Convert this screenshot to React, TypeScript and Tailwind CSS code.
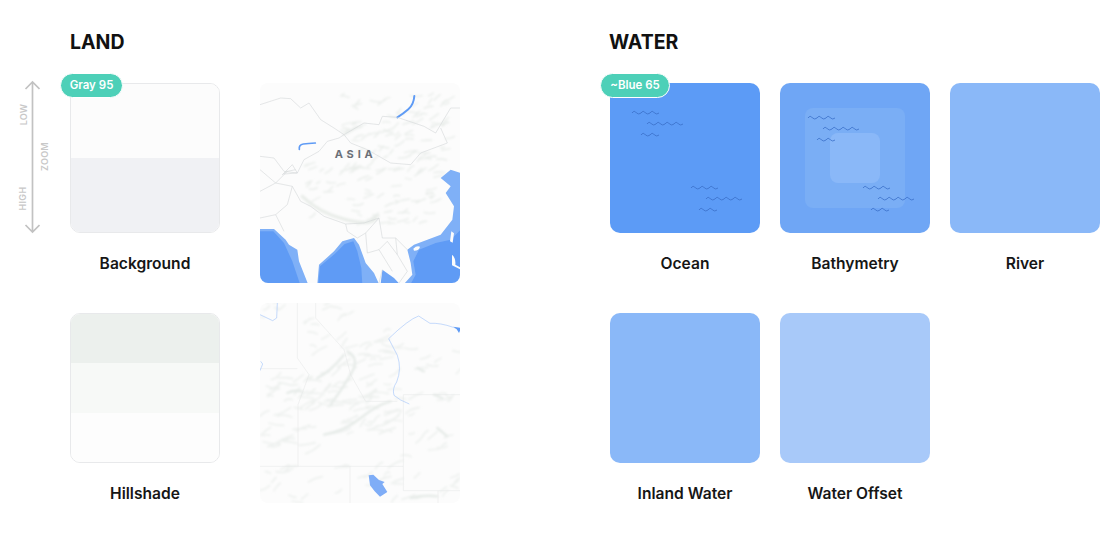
import React from 'react';

const font = { fontFamily: 'Inter, "Liberation Sans", sans-serif' };

// seeded strokes used for the shaded relief on both maps
const relief = (seed: number, count: number, x0: number, y0: number, x1: number, y1: number, len: number) => {
  let s = seed;
  const rnd = () => {
    s = (s * 16807) % 2147483647;
    return s / 2147483647;
  };
  const out: string[] = [];
  for (let i = 0; i < count; i++) {
    const x = x0 + rnd() * (x1 - x0);
    const y = y0 + rnd() * (y1 - y0);
    const dx = (0.4 + rnd()) * len;
    const dy = (0.25 - rnd()) * len;
    const bend = (rnd() - 0.5) * len * 0.5;
    out.push(`M${x.toFixed(0)} ${y.toFixed(0)}q${(dx / 2).toFixed(0)} ${(dy / 2 + bend).toFixed(0)} ${dx.toFixed(0)} ${dy.toFixed(0)}`);
  }
  return out.join('');
};

const wave = (x: number, y: number, humps: number) => {
  let d = `M${x} ${y}`;
  for (let i = 0; i < humps; i++) d += 'q2.25 -3.2 4.5 0q2.25 2 4.5 0';
  return d;
};

const Waves = ({ dx, dy, dx2 }: { dx: number; dy: number; dx2: number }) => (
  <svg className="absolute inset-0" width="150" height="150" fill="none">
    <path
      d={[
        wave(22 + dx, 30 + dy, 3),
        wave(37 + dx, 41 + dy, 4),
        wave(31 + dx, 52 + dy, 2),
        wave(81 + dx2, 105, 3),
        wave(96 + dx2, 116, 4),
        wave(89 + dx2, 127, 2),
      ].join('')}
      stroke="#3a6fc8"
      strokeWidth="0.8"
    />
  </svg>
);

const Badge = ({ text, className }: { text: string; className: string }) => (
  <div
    className={`absolute left-[-10px] top-[-10px] z-10 flex h-[25px] items-center justify-center rounded-full border border-white bg-[#4dd0b8] text-[11.5px] font-semibold text-white ${className}`}
  >
    {text}
  </div>
);

const Tile = ({ label, children, className = '' }: { label: string; children: React.ReactNode; className?: string }) => (
  <div className={`flex w-[150px] flex-col items-center ${className}`}>
    {children}
    <div className="mt-[21px] h-[20px] text-[15.6px] leading-[20px] font-semibold whitespace-nowrap text-[#161616]">{label}</div>
  </div>
);

const AsiaMap = () => (
  <svg viewBox="28 25 600 600" width="200" height="200" className="block rounded-[8px] bg-[#fcfcfc]">
    <defs>
      <filter id="soft">
        <feGaussianBlur stdDeviation="2.4" />
      </filter>
      <filter id="soft-water">
        <feGaussianBlur stdDeviation="1.6" />
      </filter>
    </defs>
    <g filter="url(#soft)" fill="none" stroke="#e9edea" strokeWidth="4" strokeLinecap="round">
      <path d={relief(11, 90, 270, 60, 600, 300, 26)} />
      <path d={relief(23, 70, 160, 270, 560, 450, 24)} />
      <path d="M155 365q50 50 130 70t90 -5" stroke="#e9ede9" strokeWidth="10" />
    </g>
    {/* oceans */}
    <g filter="url(#soft-water)">
      <path d="M27 463L70 463L105 495L115 510L140 525L145 560L172 628H27Z" fill="#7fb0f7" />
      <path d="M27 470L68 470L100 505L125 560L148 628H27Z" fill="#5f9bf5" />
      <path d="M200 628L205 570L250 530L275 500L310 490L325 510L345 565L370 595L385 628Z" fill="#7fb0f7" />
      <path d="M203 628L208 575L252 538L282 508L308 500L320 530L332 580L335 628Z" fill="#5f9bf5" />
      <path d="M390 628L395 585L430 610L447 628Z" fill="#6ea5f6" />
      <path d="M630 295L600 285L570 310L600 335L585 355L610 395L605 435L570 480L530 495L490 510L470 525L480 565L485 600L460 628H630Z" fill="#7fb0f7" />
      <path d="M630 465L600 495L555 505L505 525L488 560L495 600L480 628H630Z" fill="#5f9bf5" />
      <path d="M602 470l8 6l-4 28l-8 -4ZM488 522q10 -10 20 -6q-2 12 -18 12ZM604 540q12 10 10 30l14 8v6l-24 -12Z" fill="#fcfcfc" />
    </g>
    {/* lakes */}
    <path d="M491 64q-2 26 -18 40t-33 24" fill="none" stroke="#5f9bf5" strokeWidth="6" strokeLinecap="round" />
    <path d="M146 224q-2 -14 12 -16t36 -3" fill="none" stroke="#5f9bf5" strokeWidth="5" strokeLinecap="round" />
    {/* borders */}
    <g fill="none" stroke="#d6d9da" strokeWidth="1.9" strokeLinejoin="round">
      <path d="M28 90L90 70L120 72L150 100L175 85L210 135L250 160L280 180L340 145L385 150L395 125L440 128L520 155L555 175L600 100L628 100" />
      <path d="M280 180L300 205L350 225L420 265L480 270L510 235L590 205L570 160" />
      <path d="M280 180L265 190L230 200L205 230L160 255L140 295L100 290L70 250L28 245" />
      <path d="M28 285L75 325L110 290L135 285M28 350L75 325L125 335L150 380L180 395L220 425L285 448L340 445L385 430" />
      <path d="M125 335L110 390L75 420L28 430M75 420L100 470M285 448L290 470L320 490L345 475L385 430L395 490L435 490L470 525" />
      <path d="M110 290L95 300L125 270L140 295L100 298M345 475L350 535L385 525L425 590M435 490L440 540L470 590L445 625" />
      <path d="M385 525L410 500L440 540M395 585L385 625" />
    </g>
    <text x="315" y="249" textAnchor="middle" fontSize="33" fontWeight="700" letterSpacing="11.5" fill="#6b7078">
      ASIA
    </text>
  </svg>
);

const HillMap = () => (
  <svg viewBox="28 25 600 600" width="200" height="200" className="block rounded-[8px] bg-[#fcfcfc]">
    <defs>
      <filter id="soft2">
        <feGaussianBlur stdDeviation="2.6" />
      </filter>
    </defs>
    <g filter="url(#soft2)" fill="none" stroke="#eef1ef" strokeWidth="5" strokeLinecap="round">
      <path d={relief(7, 80, 170, 110, 420, 420, 36)} />
      <path d={relief(19, 35, 28, 250, 170, 480, 36)} />
      <path d={relief(31, 28, 430, 130, 628, 500, 32)} />
      <path d={relief(43, 36, 28, 510, 628, 628, 32)} />
      <path d={relief(57, 14, 28, 25, 300, 110, 28)} />
      {/* darker ridges */}
      <path
        d="M220 420q60 -10 110 -50t90 -50M240 330q30 -40 60 -90t-10 -70M200 250q40 -20 80 -70M110 295q20 -10 45 -5M500 220l20 10M550 300l25 10M560 400l30 25M480 610q40 -10 80 -5"
        stroke="#e6ebe8"
        strokeWidth="7"
      />
    </g>
    <g fill="none" stroke="#e4e6e7" strokeWidth="1.5">
      <path d="M140 25V190L175 240L142 330V515M28 222H140M28 515H458V300H628M458 515V588H628M298 515V625M562 588V625M195 25V70L280 165L300 240L345 320L440 320" />
    </g>
    <path
      d="M30 200l6 8l-8 20M80 25l-2 45l-12 8l-38 -18M628 104l-20 -6q-40 -14 -70 -12l-34 -22q-30 10 -90 68l26 50q14 40 -2 80q-14 20 -8 40l20 14l26 12"
      fill="none"
      stroke="#a9c8fa"
      strokeWidth="2"
    />
    <path d="M608 96L632 100L625 115L618 104Z" fill="#5f9bf5" />
    <path d="M354 542L368 540L385 556L402 562L395 568L410 592L388 606L372 590L358 572Z" fill="#7fadf7" />
  </svg>
);

const ZoomScale = () => (
  <div className="absolute left-[-50px] top-[-4px] h-[156px] w-[40px] text-[9px] font-semibold tracking-[0.3px] text-[#c8c8c8]">
    <svg width="20" height="156" className="absolute left-0 top-0" fill="none" stroke="#c2c2c2" strokeWidth="1.7">
      <path d="M12.5 3V153M5.5 10L12.5 3L19.5 10M5.5 146L12.5 153L19.5 146" />
    </svg>
    <span className="absolute left-[-17px] top-[31px] w-[40px] -rotate-90 text-center leading-[9px]">LOW</span>
    <span className="absolute left-[4px] top-[73px] w-[40px] -rotate-90 text-center leading-[9px]">ZOOM</span>
    <span className="absolute left-[-18px] top-[115px] w-[40px] -rotate-90 text-center leading-[9px]">HIGH</span>
  </div>
);

export default function App() {
  return (
    <div className="flex h-[544px] w-[1116px] bg-white pt-[31px] pl-[70px] text-[#111]" style={font}>
      {/* Land */}
      <section className="w-[540px]">
        <h2 className="mb-[29px] h-[23px] text-[19.5px] leading-[23px] font-bold">LAND</h2>
        <div className="grid grid-cols-[150px_200px] gap-x-[40px] gap-y-[20px]">
          <Tile label="Background">
            <div className="relative h-[150px] w-[150px]">
              <ZoomScale />
              <Badge text="Gray 95" className="w-[63px]" />
              <div className="flex h-full flex-col overflow-hidden rounded-[10px] border border-[#e8e9eb]">
                <div className="h-1/2 bg-[#fcfcfc]" />
                <div className="h-1/2 bg-[#f0f1f4]" />
              </div>
            </div>
          </Tile>
          <AsiaMap />
          <Tile label="Hillshade" className="mt-[10px]">
            <div className="flex h-[150px] w-[150px] flex-col overflow-hidden rounded-[10px] border border-[#e8e9eb]">
              <div className="flex-1 bg-[#ecf0ed]" />
              <div className="flex-1 bg-[#f7f9f7]" />
              <div className="flex-1 bg-[#fdfdfd]" />
            </div>
          </Tile>
          <HillMap />
        </div>
      </section>

      {/* Water */}
      <section>
        <h2 className="-ml-px mb-[29px] h-[23px] text-[19.5px] leading-[23px] font-bold">WATER</h2>
        <div className="grid grid-cols-[150px_150px_150px] gap-x-[20px] gap-y-[39px]">
          <Tile label="Ocean">
            <div className="relative h-[150px] w-[150px] rounded-[10px] bg-[#5c9bf6]">
              <Badge text="~Blue 65" className="w-[70px]" />
              <Waves dx={0} dy={0} dx2={0} />
            </div>
          </Tile>
          <Tile label="Bathymetry">
            <div className="relative flex h-[150px] w-[150px] items-center justify-center rounded-[10px] bg-[#6fa6f5]">
              <div className="flex h-[100px] w-[100px] items-center justify-center rounded-[8px] bg-[#7aaef5]">
                <div className="h-[50px] w-[50px] rounded-[8px] bg-[#8ab8f8]" />
              </div>
              <Waves dx={6} dy={5} dx2={2} />
            </div>
          </Tile>
          <Tile label="River">
            <div className="h-[150px] w-[150px] rounded-[10px] bg-[#8ab8f8]" />
          </Tile>
          <Tile label="Inland Water">
            <div className="h-[150px] w-[150px] rounded-[10px] bg-[#8ab8f8]" />
          </Tile>
          <Tile label="Water Offset">
            <div className="h-[150px] w-[150px] rounded-[10px] bg-[#a8c9f9]" />
          </Tile>
        </div>
      </section>
    </div>
  );
}
